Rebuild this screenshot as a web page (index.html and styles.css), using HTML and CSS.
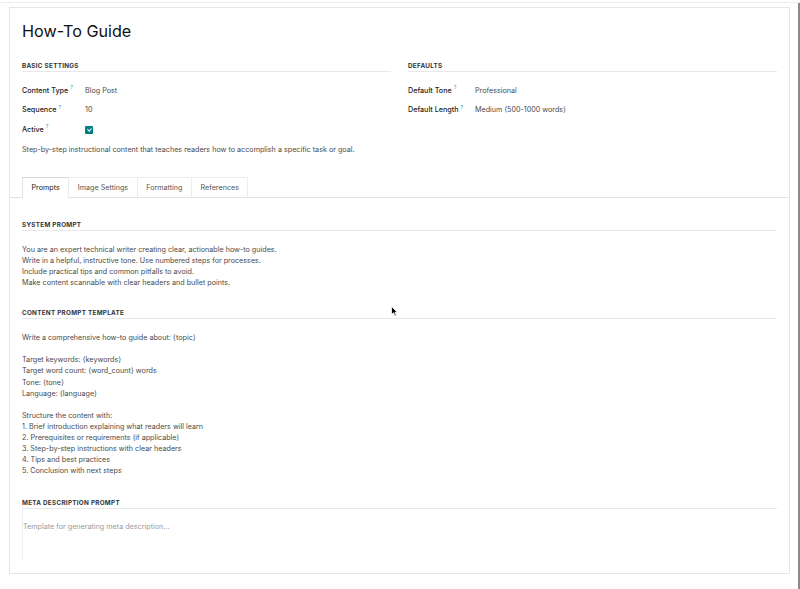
FILE: index.html
```html
<!DOCTYPE html>
<html lang="en">
<head>
  <meta charset="UTF-8">
  <meta name="viewport" content="width=device-width, initial-scale=1.0">
  <title>How-To Guide</title>
  <link rel="stylesheet" href="styles.css">
</head>
<body>

<div class="app">
  <div class="view">
    <div class="sheet">

      <h1 class="title">How-To Guide</h1>

      <div class="groups">
        <div class="group">
          <div class="group-title">Basic Settings</div>
          <div class="field">
            <span class="label">Content Type<sup>?</sup></span>
            <span class="value">Blog Post</span>
          </div>
          <div class="field">
            <span class="label">Sequence<sup>?</sup></span>
            <span class="value">10</span>
          </div>
          <div class="field">
            <span class="label">Active<sup>?</sup></span>
            <span class="value"><span class="checkbox"></span></span>
          </div>
        </div>
        <div class="group">
          <div class="group-title">Defaults</div>
          <div class="field wide">
            <span class="label">Default Tone<sup>?</sup></span>
            <span class="value">Professional</span>
          </div>
          <div class="field wide">
            <span class="label">Default Length<sup>?</sup></span>
            <span class="value">Medium (500-1000 words)</span>
          </div>
        </div>
      </div>

      <p class="description">Step-by-step instructional content that teaches readers how to accomplish a specific task or goal.</p>

      <div class="tabs">
        <div class="tab active">Prompts</div>
        <div class="tab">Image Settings</div>
        <div class="tab">Formatting</div>
        <div class="tab">References</div>
      </div>

      <div class="section">
        <div class="section-title">System Prompt</div>
        <div class="prompt">You are an expert technical writer creating clear, actionable how-to guides.
Write in a helpful, instructive tone. Use numbered steps for processes.
Include practical tips and common pitfalls to avoid.
Make content scannable with clear headers and bullet points.</div>
      </div>

      <div class="section">
        <div class="section-title">Content Prompt Template</div>
        <div class="prompt">Write a comprehensive how-to guide about: {topic}

Target keywords: {keywords}
Target word count: {word_count} words
Tone: {tone}
Language: {language}

Structure the content with:
1. Brief introduction explaining what readers will learn
2. Prerequisites or requirements (if applicable)
3. Step-by-step instructions with clear headers
4. Tips and best practices
5. Conclusion with next steps</div>
      </div>

      <div class="section meta">
        <div class="section-title">Meta Description Prompt</div>
        <div class="textarea">Template for generating meta description...</div>
      </div>

    </div>

    <svg class="cursor" width="7" height="11" viewBox="0 0 7 11">
      <path d="M0.5 0.5 L0.5 8.5 L2.5 6.8 L4 10 L5.3 9.4 L3.9 6.3 L6.3 6.3 Z" fill="#000" stroke="#fff" stroke-width="0.8"/>
    </svg>
  </div>
  <div class="scrollbar"></div>
</div>

</body>
</html>
```

FILE: styles.css
```css
body {
  margin: 0;
  background-color: #ffffff;
  font-family: Inter, "Noto Sans", sans-serif;
  color: #4a4a4a;
  overflow: hidden;
}

.app {
  display: flex;
  height: 589px;
  border-top: 1px solid #ececec;
  margin-top: 2px;
}

.view {
  flex: 1;
  position: relative;
  padding: 4px 8px 0 9px;
}

.scrollbar {
  width: 2px;
  background-color: #8a8a8a;
}

.sheet {
  height: 567px;
  border: 1px solid #e6e6e6;
  padding: 0 12px 0 12px;
  box-sizing: border-box;
}

.title {
  margin: 12px 0 0 0;
  font-size: 16.2px;
  line-height: 22px;
  font-weight: 400;
  color: #111111;
}

.groups {
  display: grid;
  grid-template-columns: 1fr 1fr;
  column-gap: 17px;
  margin-top: 19px;
}

.group-title,
.section-title {
  font-size: 6.3px;
  line-height: 10px;
  font-weight: 700;
  text-transform: uppercase;
  letter-spacing: 0.3px;
  color: #333333;
  border-bottom: 1px solid #e8e8e8;
}

.group-title {
  margin-bottom: 9px;
}

.field {
  display: flex;
  align-items: center;
  height: 19.6px;
  font-size: 7.2px;
  line-height: 10px;
}

.label {
  width: 63px;
  flex-shrink: 0;
  font-weight: 500;
  color: #222222;
}

.field.wide .label {
  width: 67px;
}

.label sup {
  font-size: 5px;
  line-height: 0;
  color: #4aa3c8;
  margin-left: 2px;
  vertical-align: baseline;
  position: relative;
  top: -3.5px;
}

.value {
  color: #4a4a4a;
}

.checkbox {
  display: block;
  width: 8px;
  height: 8px;
  border-radius: 1px;
  background-color: #017e84;
  position: relative;
}

.checkbox::after {
  content: "";
  position: absolute;
  left: 2.6px;
  top: 1.2px;
  width: 1.6px;
  height: 3.4px;
  border: solid #ffffff;
  border-width: 0 1px 1px 0;
  transform: rotate(45deg);
}

.description {
  margin: 4px 0 0 0;
  font-size: 7.2px;
  line-height: 11px;
}

.tabs {
  display: flex;
  margin: 22px -12px 0 -12px;
  padding-left: 12px;
  border-bottom: 1px solid #e3e3e3;
}

.tab {
  font-size: 7.2px;
  line-height: 19px;
  padding: 0 8.5px;
  color: #555555;
  border: 1px solid #ececec;
  border-bottom: none;
  border-left: none;
}

.tab.active {
  color: #222222;
  border-left: 1px solid #e3e3e3;
  border-top-color: #d6d6d6;
  margin-bottom: -1px;
  background-color: #ffffff;
  padding-bottom: 1px;
}

.section {
  margin-top: 22px;
}

.section + .section {
  margin-top: 20px;
}

.section.meta {
  margin-top: 22px;
}

.prompt {
  white-space: pre-line;
  font-size: 7.2px;
  line-height: 11.1px;
  margin-top: 13px;
}

.textarea {
  border-left: 1px solid #f0f0f0;
  font-size: 7.2px;
  line-height: 11px;
  color: #9a9a9a;
  padding-top: 12px;
  height: 40px;
}

.cursor {
  position: absolute;
  left: 391px;
  top: 303px;
}
```
